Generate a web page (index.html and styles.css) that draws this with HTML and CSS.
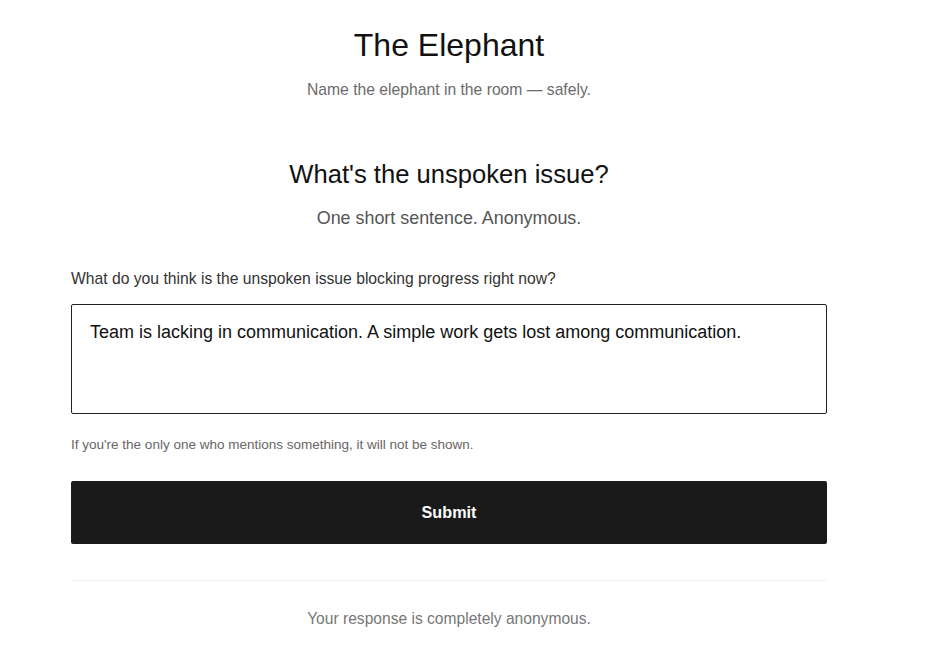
FILE: index.html
```html
<!DOCTYPE html>
<html lang="en">
<head>
<meta charset="utf-8">
<title>The Elephant</title>
<link rel="stylesheet" href="styles.css">
</head>
<body>
<div class="page">
  <main class="container">
    <header class="intro">
      <h1 class="title">The Elephant</h1>
      <p class="tagline">Name the elephant in the room — safely.</p>
    </header>
    <section class="question">
      <h2 class="question-title">What's the unspoken issue?</h2>
      <p class="question-sub">One short sentence. Anonymous.</p>
    </section>
    <form class="form">
      <label class="label" for="issue">What do you think is the unspoken issue blocking progress right now?</label>
      <textarea id="issue" class="field" autofocus>Team is lacking in communication. A simple work gets lost among communication.</textarea>
      <p class="hint">If you're the only one who mentions something, it will not be shown.</p>
      <button type="button" class="submit">Submit</button>
    </form>
    <hr class="divider">
    <p class="footer">Your response is completely anonymous.</p>
  </main>
</div>
</body>
</html>
```
FILE: styles.css
```css
* { box-sizing: border-box; }
html, body { margin: 0; padding: 0; background: #fff; }
body {
  font-family: "Liberation Sans", Arial, sans-serif;
  color: #111;
}
.page {
  width: 898px;
  padding-top: 26px;
}
.container {
  max-width: 756px;
  margin: 0 auto;
}
.intro, .question { text-align: center; }
.title {
  margin: 0;
  font-size: 32px;
  line-height: 38px;
  font-weight: 400;
  color: #111;
}
.tagline {
  margin: 16px 0 0;
  font-size: 15.7px;
  line-height: 20px;
  color: #6b6b6b;
}
.question { margin-top: 58px; }
.question-title {
  margin: 0;
  font-size: 25.6px;
  line-height: 32px;
  font-weight: 400;
  color: #111;
}
.question-sub {
  margin: 16px 0 0;
  font-size: 17.9px;
  line-height: 24px;
  color: #555;
}
.form {
  margin-top: 39px;
  display: flex;
  flex-direction: column;
}
.label {
  font-size: 15.7px;
  line-height: 20px;
  color: #333;
}
.field {
  margin-top: 15px;
  width: 100%;
  height: 110px;
  border: 1px solid #222;
  border-radius: 2px;
  padding: 15px 18px;
  font-family: "Liberation Sans", Arial, sans-serif;
  font-size: 18px;
  line-height: 24px;
  color: #111;
  resize: none;
  outline: none;
  background: #fff;
}
.hint {
  margin: 22px 0 0;
  font-size: 13.5px;
  line-height: 18px;
  color: #666;
}
.submit {
  margin-top: 27px;
  height: 63px;
  width: 100%;
  border: none;
  border-radius: 2px;
  background: #1a1a1a;
  color: #fff;
  font-family: "Liberation Sans", Arial, sans-serif;
  font-size: 16.2px;
  font-weight: 700;
  cursor: pointer;
}
.divider {
  margin: 36px 0 0;
  border: none;
  border-top: 1px solid #f1f1f1;
  height: 0;
}
.footer {
  margin: 28px 0 0;
  text-align: center;
  font-size: 15.6px;
  line-height: 20px;
  color: #777;
}
```
